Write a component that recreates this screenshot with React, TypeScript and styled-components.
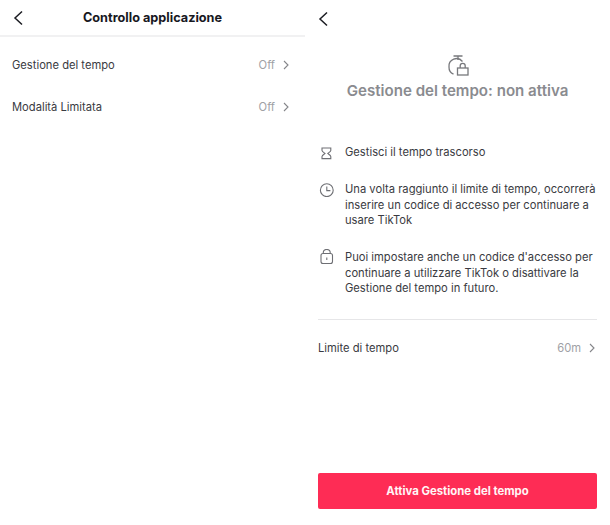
import React from "react";
import styled, { createGlobalStyle } from "styled-components";

const Global = createGlobalStyle`
  html, body {
    margin: 0;
    padding: 0;
    background: #ffffff;
  }
  * {
    box-sizing: border-box;
  }
`;

const Page = styled.div`
  width: 610px;
  height: 525px;
  display: grid;
  grid-template-columns: 305px 305px;
  font-family: Inter, sans-serif;
  color: #2b2c33;
  overflow: hidden;
`;

const Panel = styled.section`
  display: flex;
  flex-direction: column;
`;

const Header = styled.header`
  height: 37px;
  padding-left: 13px;
  display: flex;
  align-items: center;
  position: relative;
  border-bottom: 2px solid #f1f1f2;
`;

const HeaderTitle = styled.h1`
  flex: 1;
  margin: 0 0 0 -13px;
  text-align: center;
  font-size: 12.7px;
  font-weight: 700;
  color: #17181f;
`;

const BackIcon = styled.svg`
  width: 11px;
  height: 16px;
  flex: none;
  position: absolute;
  fill: none;
  stroke: #1b1c22;
  stroke-width: 1.5;
`;

const SettingRow = styled.div`
  height: 42px;
  display: flex;
  align-items: center;
  justify-content: space-between;
  font-size: 11.2px;
  color: #3a3b42;
`;

const RowList = styled.div`
  padding: 7px 16px 0 12px;
`;

const RowValue = styled.span`
  display: flex;
  align-items: center;
  gap: 8px;
  color: #a0a1a5;
`;

const Chevron = styled.svg`
  width: 6px;
  height: 10px;
  fill: none;
  stroke: #85868a;
  stroke-width: 1.1;
`;

const RightPanel = styled(Panel)`
  padding: 0 13px 0 13px;
`;

const TopBar = styled.div`
  height: 37px;
  display: flex;
  align-items: center;
`;

const Hero = styled.div`
  margin-top: 17px;
  display: flex;
  flex-direction: column;
  align-items: center;
  gap: 4px;
`;

const HeroTitle = styled.h2`
  margin: 0;
  font-size: 15.1px;
  line-height: 20px;
  font-weight: 600;
  color: #8a8b8f;
`;

const Features = styled.div`
  margin-top: 44px;
  display: flex;
  flex-direction: column;
  gap: 21.5px;
`;

const Feature = styled.div`
  display: grid;
  grid-template-columns: 27px 1fr;
  font-size: 11.2px;
  line-height: 15.5px;
  color: #3a3b42;
`;

const FeatureIcon = styled.svg`
  width: 16px;
  height: 16px;
  margin-top: -1px;
  fill: none;
  stroke: #6e6f74;
  stroke-width: 1.1;
`;

const Rule = styled.div`
  height: 1px;
  background: #e6e6e8;
  margin-top: 22px;
`;

const LimitRow = styled(SettingRow)`
  margin-top: 7px;
  height: 42px;
  padding-right: 2px;
`;

const Action = styled.button`
  margin-top: auto;
  margin-bottom: 16px;
  height: 36px;
  border: 0;
  border-radius: 2px;
  background: #fe2c55;
  color: #fff5f6;
  font-family: inherit;
  font-size: 11.35px;
  font-weight: 700;
`;

const Back = () => (
  <BackIcon viewBox="0 0 11 16">
    <path d="M9 1.5 2 8l7 6.5" />
  </BackIcon>
);

const More = () => (
  <Chevron viewBox="0 0 6 10">
    <path d="M1 1l4 4-4 4" />
  </Chevron>
);

export default function App() {
  return (
    <Page>
      <Global />
      <Panel>
        <Header>
          <Back />
          <HeaderTitle>Controllo applicazione</HeaderTitle>
        </Header>
        <RowList>
          <SettingRow>
            Gestione del tempo
            <RowValue>
              Off <More />
            </RowValue>
          </SettingRow>
          <SettingRow>
            Modalità Limitata
            <RowValue>
              Off <More />
            </RowValue>
          </SettingRow>
        </RowList>
      </Panel>
      <RightPanel>
        <TopBar>
          <Back />
        </TopBar>
        <Hero>
          <svg width="22" height="23" viewBox="0 0 22 23" fill="none" stroke="#77787c" strokeWidth="1.3">
            <path d="M6.5 2h9M11 2v4" />
            <path d="M15.5 7.5A7.6 7.6 0 0 0 2 13a7.6 7.6 0 0 0 4.5 7.2" />
            <rect x="10.5" y="14" width="10.5" height="7" />
            <path d="M13.2 14v-2.2a2.5 2.5 0 0 1 5 0V14" />
          </svg>
          <HeroTitle>Gestione del tempo: non attiva</HeroTitle>
        </Hero>
        <Features>
          <Feature>
            <FeatureIcon viewBox="0 0 16 16">
              <path d="M4 4h8.8v2.4c0 1.2-1.6 2-3 3 1.4 1 3 2 3 3.2v2H4v-2c0-1.2 1.6-2.2 3-3.2-1.4-1-3-1.8-3-3z" />
            </FeatureIcon>
            Gestisci il tempo trascorso
          </Feature>
          <Feature>
            <FeatureIcon viewBox="0 0 16 16">
              <circle cx="8.8" cy="9.2" r="6.4" />
              <path d="M8.8 5.6v4h3.6" />
            </FeatureIcon>
            <span>
              Una volta raggiunto il limite di tempo, occorrerà inserire un codice di accesso per continuare a usare TikTok
            </span>
          </Feature>
          <Feature>
            <FeatureIcon viewBox="0 0 16 16">
              <rect x="3" y="4.5" width="11.5" height="10" rx="2" />
              <path d="M5.3 4.5V3.6a3.4 3.1 0 0 1 6.9 0v.9M8.8 8.5v2.6" />
            </FeatureIcon>
            <span>
              Puoi impostare anche un codice d'accesso per continuare a utilizzare TikTok o disattivare la Gestione del tempo in futuro.
            </span>
          </Feature>
        </Features>
        <Rule />
        <LimitRow>
          Limite di tempo
          <RowValue>
            60m <More />
          </RowValue>
        </LimitRow>
        <Action>Attiva Gestione del tempo</Action>
      </RightPanel>
    </Page>
  );
}
